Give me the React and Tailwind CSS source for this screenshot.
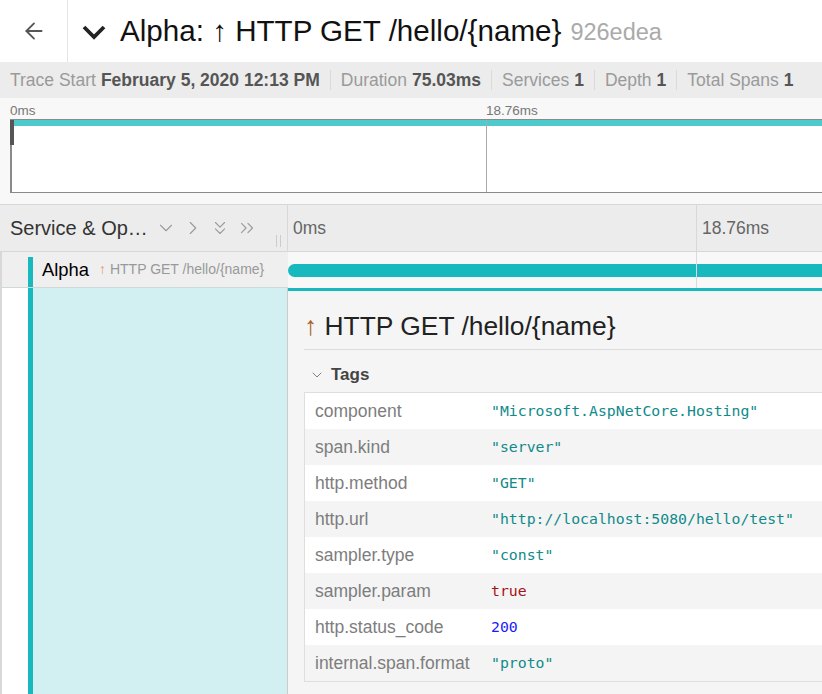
import { ArrowLeft, ChevronDown, ChevronRight, ChevronsDown, ChevronsRight } from 'lucide-react';

const tags = [
    { key: 'component', value: '"Microsoft.AspNetCore.Hosting"', kind: 'str' },
    { key: 'span.kind', value: '"server"', kind: 'str' },
    { key: 'http.method', value: '"GET"', kind: 'str' },
    { key: 'http.url', value: '"http://localhost:5080/hello/test"', kind: 'str' },
    { key: 'sampler.type', value: '"const"', kind: 'str' },
    { key: 'sampler.param', value: 'true', kind: 'bool' },
    { key: 'http.status_code', value: '200', kind: 'num' },
    { key: 'internal.span.format', value: '"proto"', kind: 'str' },
];

const valueColor = {
    str: 'text-[#108a8a]',
    bool: 'text-[#a31515]',
    num: 'text-[#1a1aff]',
};

function Stat({ label, value, last }) {
    return (
        <div className="flex items-center">
            <span className="text-[#9a9a9a]">{label}</span>
            <span className="ml-[5px] font-bold text-[#555]">{value}</span>
            {!last && <span className="mx-[10px] h-[20px] w-px bg-[#dadada]" />}
        </div>
    );
}

export default function App() {
    return (
        <div className="h-[694px] w-[822px] overflow-hidden bg-white font-['Liberation_Sans',Arial,sans-serif]">
            {/* trace title */}
            <header className="flex h-[62px] items-center">
                <div className="flex h-full w-[68px] items-center justify-center border-r border-[#e6e6e6]">
                    <ArrowLeft size={26} strokeWidth={1.7} className="text-[#555]" />
                </div>
                <div className="flex items-center pl-[14px] whitespace-nowrap">
                    <svg width="24" height="16" viewBox="0 0 24 16" className="mt-[2px]">
                        <polyline points="2,3 12,13 22,3" fill="none" stroke="#222" strokeWidth="3.8" />
                    </svg>
                    <h1 className="ml-[14px] text-[29.6px] leading-none text-[#111]">Alpha: ↑ HTTP GET /hello/{'{name}'}</h1>
                    <span className="ml-[9px] mt-[4px] text-[23.5px] leading-none text-[#aaa]">926edea</span>
                </div>
            </header>

            {/* stats */}
            <div className="flex h-[36px] items-center bg-[#ececec] px-[10px] text-[17.5px] whitespace-nowrap">
                <Stat label="Trace Start" value="February 5, 2020 12:13 PM" />
                <Stat label="Duration" value="75.03ms" />
                <Stat label="Services" value="1" />
                <Stat label="Depth" value="1" />
                <Stat label="Total Spans" value="1" last />
            </div>

            {/* minimap */}
            <div className="h-[107px] border-b border-[#d8d8d8] bg-[#f8f8f8]">
                <div className="relative h-[21px] text-[13.5px] text-[#777]">
                    <span className="absolute left-[10px] top-[3px]">0ms</span>
                    <span className="absolute left-[486px] top-[3px]">18.76ms</span>
                </div>
                <div className="relative ml-[10px] h-[74px] border-b border-l-2 border-t border-[#8a8a8a] bg-white">
                    <div className="h-[6px] bg-[#4dcacc]" />
                    <div className="absolute left-[474px] top-0 h-full w-px bg-[#aaa]" />
                    <div className="absolute -left-[2px] top-0 h-[25px] w-[4px] bg-[#555]" />
                </div>
            </div>

            {/* column header */}
            <div className="flex h-[47px] border-b border-[#d8d8d8] bg-[#ececec]">
                <div className="relative flex w-[288px] shrink-0 items-center border-r border-[#d8d8d8] pl-[10px]">
                    <span className="text-[20px] text-[#333]">Service &amp; Op…</span>
                    <div className="ml-[7px] flex items-center gap-[5px] text-[#9a9a9a]">
                        <ChevronDown size={22} strokeWidth={1.2} />
                        <ChevronRight size={22} strokeWidth={1.2} />
                        <ChevronsDown size={22} strokeWidth={1.2} />
                        <ChevronsRight size={22} strokeWidth={1.2} />
                    </div>
                    <div className="absolute bottom-[4px] right-[6px] flex gap-[3px]">
                        <span className="h-[12px] w-px bg-[#ccc]" />
                        <span className="h-[12px] w-px bg-[#ccc]" />
                    </div>
                </div>
                <div className="relative flex flex-1 items-center text-[17.5px] text-[#666]">
                    <span className="pl-[5px]">0ms</span>
                    <div className="absolute left-[408px] top-0 flex h-full items-center border-l border-[#d8d8d8] pl-[5px]">18.76ms</div>
                </div>
            </div>

            {/* span row */}
            <div className="flex h-[36px]">
                <div className="flex w-[288px] shrink-0 border-b border-l-2 border-[#cfd9d9] border-l-[#d8d8d8] bg-[#efefef] pl-[26px]">
                    <div className="mt-[5px] w-[5px] bg-[#17b8be]" />
                    <div className="ml-[9px] flex items-center whitespace-nowrap">
                        <span className="text-[18.4px] text-black">Alpha</span>
                        <span className="ml-[10px] text-[14px] text-[#999]">
                            <span className="text-[#e8a064]">↑</span> HTTP GET /hello/{'{name}'}
                        </span>
                    </div>
                </div>
                <div className="relative flex flex-1 items-center bg-[#f8f8f8]">
                    <div className="h-[13px] w-full rounded-l-[7px] bg-[#18b9be]" />
                    <div className="absolute left-[408px] top-0 h-full w-px bg-[#dadada]" />
                </div>
            </div>

            {/* detail row */}
            <div className="flex h-[406px]">
                <div className="flex w-[288px] shrink-0 border-l-2 border-[#d8d8d8] bg-white pl-[26px]">
                    <div className="w-[5px] bg-[#17b8be]" />
                    <div className="flex-1 border-r border-[#cccccc] bg-[#d2f0f2]" />
                </div>
                <div className="flex-1 overflow-hidden border-t-[3px] border-[#17b8be] bg-[#f5f5f5] pl-[16px]">
                    <div className="w-[700px] border-b border-[#dcdcdc] pb-[10px] pt-[22px]">
                        <h2 className="text-[26.4px] leading-[26px] whitespace-nowrap text-[#222]">
                            <span className="text-[#a85d1c]">↑</span> HTTP GET /hello/{'{name}'}
                        </h2>
                    </div>
                    <div className="flex items-center pt-[16px] pb-[8px] leading-[18px]">
                        <ChevronDown size={16} strokeWidth={1.4} className="ml-[5px] text-[#777]" />
                        <span className="ml-[6px] text-[17px] font-bold text-[#444]">Tags</span>
                    </div>
                    <div className="w-[700px] border border-[#dedede]">
                        {tags.map((tag, i) => (
                            <div key={tag.key} className={`flex h-[36px] items-center ${i % 2 === 1 ? 'bg-[#f4f4f4]' : 'bg-white'}`}>
                                <div className="w-[176px] shrink-0 pl-[10px] text-[17.5px] text-[#7d7d7d] whitespace-nowrap">{tag.key}</div>
                                <div className={`pl-[10px] font-['DejaVu_Sans_Mono',monospace] text-[14.8px] whitespace-nowrap ${valueColor[tag.kind]}`}>{tag.value}</div>
                            </div>
                        ))}
                    </div>
                </div>
            </div>
        </div>
    );
}
